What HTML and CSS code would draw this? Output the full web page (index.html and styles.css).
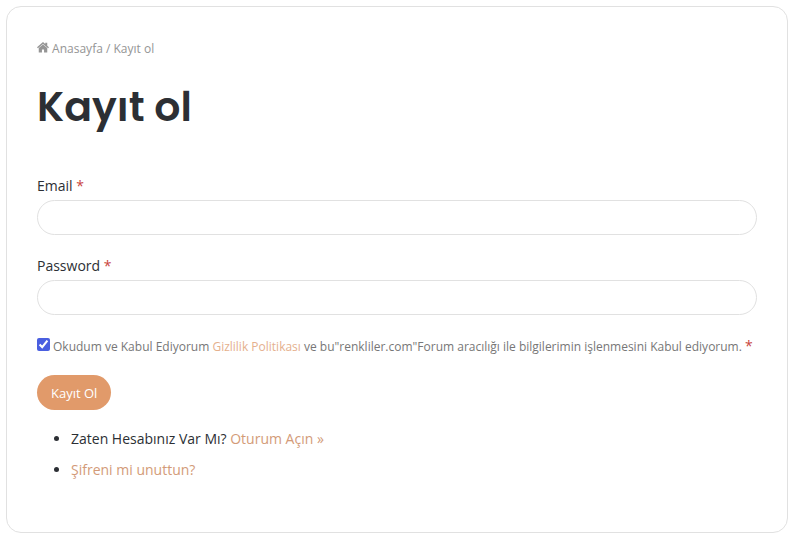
FILE: index.html
```html
<!DOCTYPE html>
<html lang="tr">
<head>
    <meta charset="UTF-8">
    <meta name="viewport" content="width=device-width, initial-scale=1.0">
    <title>Kayıt ol</title>
    <link rel="stylesheet" href="styles.css">
</head>
<body>
    <main class="container">
        <nav class="breadcrumb">
            <a href="#"><svg class="home-icon" viewBox="0 0 24 22" aria-hidden="true"><path d="M12 0 0 10.500l1.800 2.200L12 4l10.200 8.700 1.800-2.200-3.500-3V1.500h-4v2.400z"/><path d="M12 5 3.500 12.200V21h6.400v-6h4.200v6h6.400v-8.800z"/></svg> Anasayfa</a> / <span>Kayıt ol</span>
        </nav>

        <h1>Kayıt ol</h1>

        <form class="register-form">
            <div class="form-group">
                <label for="email">Email <span class="required">*</span></label>
                <input type="email" id="email">
            </div>

            <div class="form-group">
                <label for="password">Password <span class="required">*</span></label>
                <input type="password" id="password">
            </div>

            <div class="consent">
                <input type="checkbox" id="consent" checked>
                <label for="consent">Okudum ve Kabul Ediyorum <a href="#">Gizlilik Politikası</a> ve bu"renkliler.com"Forum aracılığı ile bilgilerimin işlenmesini Kabul ediyorum. <span class="required">*</span></label>
            </div>

            <button type="submit" class="submit-btn">Kayıt Ol</button>
        </form>

        <ul class="form-links">
            <li>Zaten Hesabınız Var Mı? <a href="#">Oturum Açın »</a></li>
            <li><a href="#">Şifreni mi unuttun?</a></li>
        </ul>
    </main>
</body>
</html>
```
FILE: styles.css
```css
:root {
    --accent: #e19a6a;
    --link: #d39b78;
    --dark: #2c2f34;
    --muted: #959595;
    --border: #e1e1e1;
    --danger: #c9453d;
}

* {
    box-sizing: border-box;
    margin: 0;
    padding: 0;
}

body {
    background-color: #fff;
    color: var(--dark);
    font-family: "Segoe UI", "Open Sans", "Noto Sans", sans-serif;
    font-size: 14px;
    line-height: 20px;
    padding: 6px;
}

a {
    color: var(--link);
    text-decoration: none;
}

.container {
    padding: 32px 30px 41px;
    border: 1px solid var(--border);
    border-radius: 15px;
}

.breadcrumb,
.breadcrumb a {
    color: var(--muted);
    font-size: 12px;
}

.home-icon {
    width: 12px;
    height: 11px;
    fill: currentColor;
}

h1 {
    margin: 24px 0 45px;
    font-family: Poppins, Inter, sans-serif;
    font-size: 41px;
    font-weight: 600;
    line-height: 48px;
}

.form-group {
    margin-bottom: 21px;
}

.form-group label {
    display: block;
    margin-bottom: 4px;
}

.form-group input {
    display: block;
    width: 100%;
    height: 35px;
    padding: 0 15px;
    border: 1px solid var(--border);
    border-radius: 35px;
    font: inherit;
}

.required {
    color: var(--danger);
    font-size: 14px;
}

.consent {
    display: flex;
    align-items: center;
    gap: 3px;
    margin-bottom: 18px;
    color: #777;
    font-size: 12px;
}

.consent input {
    width: 13px;
    height: 13px;
    margin-bottom: 4px;
    accent-color: #4a5fe0;
}

.consent a {
    color: #e5b08d;
}

.submit-btn {
    height: 35px;
    padding: 0 14px;
    border: none;
    border-radius: 35px;
    background-color: var(--accent);
    color: #fff;
    font: inherit;
    font-size: 13px;
    cursor: pointer;
}

.form-links {
    margin-top: 19px;
    padding-left: 34px;
}

.form-links li {
    margin-bottom: 11px;
}
```
